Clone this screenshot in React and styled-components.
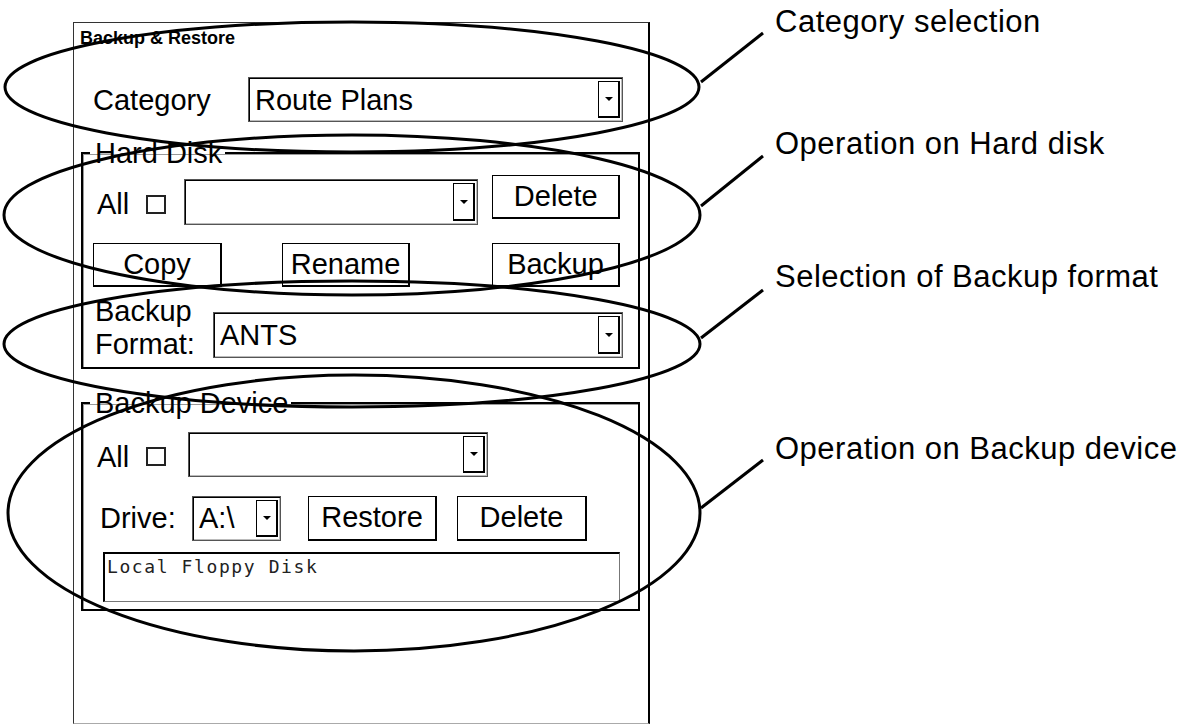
import React from "react";
import styled, { createGlobalStyle } from "styled-components";

const GlobalStyle = createGlobalStyle`
  html, body {
    margin: 0;
    padding: 0;
    background: #fff;
  }
  body {
    font-family: "Liberation Sans", Arial, sans-serif;
    color: #000;
  }
`;

const Page = styled.div`
  position: relative;
  box-sizing: border-box;
  width: 1187px;
  height: 724px;
  overflow: hidden;
  padding: 22px 0 0 73px;
  background: #fff;
`;

// the dialog panel
const Panel = styled.div`
  box-sizing: border-box;
  width: 577px;
  height: 702px;
  display: flex;
  flex-direction: column;
  border-top: 1px solid #333;
  border-left: 1px solid #333;
  border-right: 2px solid #000;
  border-bottom: 1px solid #aaa;
  font-size: 29px;
`;

const PanelTitle = styled.div`
  margin: 5px 0 0 6px;
  height: 21px;
  font-size: 18px;
  line-height: 21px;
  font-weight: bold;
  white-space: nowrap;
`;

const Row = styled.div`
  display: flex;
  align-items: ${(p) => p.$align || "center"};
  height: ${(p) => (p.$h ? `${p.$h}px` : "auto")};
  margin-top: ${(p) => p.$mt || 0}px;
  padding-left: ${(p) => p.$pl || 0}px;
`;

const FieldLabel = styled.span`
  flex: none;
  width: ${(p) => p.$w}px;
  line-height: ${(p) => p.$lh || 34}px;
  white-space: nowrap;
`;

const Combo = styled.div`
  box-sizing: border-box;
  flex: none;
  display: flex;
  align-items: center;
  width: ${(p) => p.$w}px;
  height: ${(p) => p.$h || 45}px;
  margin-left: ${(p) => p.$ml || 0}px;
  margin-top: ${(p) => p.$mt || 0}px;
  border: 1px solid #555;
  box-shadow: inset 1px 1px 0 #000, inset -1px -1px 0 #bbb;
  background: #fff;
`;

const ComboValue = styled.span`
  flex: 1;
  min-width: 0;
  padding-left: 6px;
  line-height: 34px;
  white-space: nowrap;
`;

const DropButton = styled.span`
  box-sizing: border-box;
  flex: none;
  display: flex;
  align-items: center;
  justify-content: center;
  width: 22px;
  height: calc(100% - 6px);
  margin-right: 2px;
  border: 1px solid #000;
  border-right-width: 2px;
  border-bottom-width: 2px;
  background: #fff;

  &::after {
    content: "";
    border-left: 4px solid transparent;
    border-right: 4px solid transparent;
    border-top: 4px solid #000;
  }
`;

const PushButton = styled.button`
  box-sizing: border-box;
  flex: none;
  width: ${(p) => p.$w}px;
  height: ${(p) => p.$h || 44}px;
  margin: ${(p) => p.$mt || 0}px 0 0 ${(p) => p.$ml || 0}px;
  align-self: ${(p) => (p.$mt ? "flex-start" : "auto")};
  padding: 0;
  background: #fff;
  color: #000;
  font: 29px "Liberation Sans", Arial, sans-serif;
  border: 1px solid #000;
  border-right-width: 2px;
  border-bottom-width: 2px;
  border-radius: 0;
  white-space: nowrap;
`;

const CheckLabel = styled.span`
  flex: none;
  display: flex;
  align-items: center;
  margin-top: 4px;
  line-height: 34px;
`;

const CheckBox = styled.span`
  box-sizing: border-box;
  flex: none;
  width: 20px;
  height: 19px;
  margin-left: 17px;
  border: 2px solid #222;
`;

const GroupBox = styled.fieldset`
  margin: ${(p) => p.$mt}px 8px 0 7px;
  padding: 0 0 ${(p) => p.$pb}px 0;
  border: 2px solid #000;
  box-shadow: inset 1px 1px 0 #999;
  min-width: 0;
`;

const GroupLegend = styled.legend`
  margin-left: 7px;
  padding: 0 3px 0 5px;
  height: 34px;
  font-size: 29px;
  line-height: 34px;
`;

const InfoBox = styled.div`
  box-sizing: border-box;
  width: 517px;
  height: 50px;
  margin: 11px 0 0 20px;
  padding: 2px 0 0 2px;
  border-top: 2px solid #000;
  border-left: 2px solid #000;
  border-right: 1px solid #777;
  border-bottom: 1px solid #777;
  font: 18px/22px "DejaVu Sans Mono", monospace;
  letter-spacing: 1.6px;
  color: #222;
`;

// annotation layer
const Overlay = styled.svg`
  position: absolute;
  left: 0;
  top: 0;
  pointer-events: none;
`;

const Callout = styled.div`
  position: absolute;
  left: 775px;
  top: ${(p) => p.$top}px;
  font-size: 31px;
  line-height: 36px;
  letter-spacing: 0.5px;
  white-space: nowrap;
`;

const Select = ({ value, ...rest }) => (
  <Combo {...rest}>
    <ComboValue>{value}</ComboValue>
    <DropButton />
  </Combo>
);

const ellipses = [
  { cx: 352, cy: 87, rx: 347, ry: 65 },
  { cx: 352, cy: 215, rx: 348, ry: 80 },
  { cx: 352, cy: 344, rx: 348, ry: 63 },
  { cx: 354, cy: 513, rx: 346, ry: 138 },
];

const callouts = [
  { text: "Category selection", top: 4, line: [701, 82, 763, 33] },
  { text: "Operation on Hard disk", top: 126, line: [701, 206, 763, 156] },
  { text: "Selection of Backup format", top: 259, line: [701, 338, 763, 290] },
  { text: "Operation on Backup device", top: 431, line: [701, 508, 763, 460] },
];

export default function App() {
  return (
    <>
      <GlobalStyle />
      <Page>
        <Panel>
          <PanelTitle>Backup &amp; Restore</PanelTitle>

          <Row $mt={28} $h={45} $pl={19}>
            <FieldLabel $w={155}>Category</FieldLabel>
            <Select value="Route Plans" $w={375} $h={45} />
          </Row>

          <GroupBox $mt={14} $pb={6}>
            <GroupLegend>Hard Disk</GroupLegend>
            <Row $mt={9} $h={46} $pl={14}>
              <CheckLabel>
                All
                <CheckBox />
              </CheckLabel>
              <Select value="" $w={294} $h={46} $ml={18} />
              <PushButton $w={128} $ml={14} $mt={-4}>
                Delete
              </PushButton>
            </Row>
            <Row $mt={18} $h={44} $pl={10}>
              <PushButton $w={129}>Copy</PushButton>
              <PushButton $w={128} $ml={60}>
                Rename
              </PushButton>
              <PushButton $w={128} $ml={82}>
                Backup
              </PushButton>
            </Row>
            <Row $mt={8} $align="flex-start" $pl={12}>
              <FieldLabel $w={118} $lh={33}>
                Backup
                <br />
                Format:
              </FieldLabel>
              <Select value="ANTS" $w={410} $h={46} $mt={17} />
            </Row>
          </GroupBox>

          <GroupBox $mt={17} $pb={7}>
            <GroupLegend>Backup Device</GroupLegend>
            <Row $mt={12} $h={45} $pl={14}>
              <CheckLabel>
                All
                <CheckBox />
              </CheckLabel>
              <Select value="" $w={300} $h={45} $ml={22} />
            </Row>
            <Row $mt={18} $h={46} $pl={17}>
              <FieldLabel $w={92}>Drive:</FieldLabel>
              <Select value="A:\" $w={89} $h={45} />
              <PushButton $w={129} $h={45} $ml={27}>
                Restore
              </PushButton>
              <PushButton $w={130} $h={45} $ml={20}>
                Delete
              </PushButton>
            </Row>
            <InfoBox>Local Floppy Disk</InfoBox>
          </GroupBox>
        </Panel>

        <Overlay width="1187" height="724" viewBox="0 0 1187 724">
          {ellipses.map((e, i) => (
            <ellipse
              key={i}
              cx={e.cx}
              cy={e.cy}
              rx={e.rx}
              ry={e.ry}
              fill="none"
              stroke="#000"
              strokeWidth="3"
            />
          ))}
          {callouts.map((c, i) => (
            <line
              key={i}
              x1={c.line[0]}
              y1={c.line[1]}
              x2={c.line[2]}
              y2={c.line[3]}
              stroke="#000"
              strokeWidth="3"
            />
          ))}
        </Overlay>
        {callouts.map((c) => (
          <Callout key={c.text} $top={c.top}>
            {c.text}
          </Callout>
        ))}
      </Page>
    </>
  );
}
